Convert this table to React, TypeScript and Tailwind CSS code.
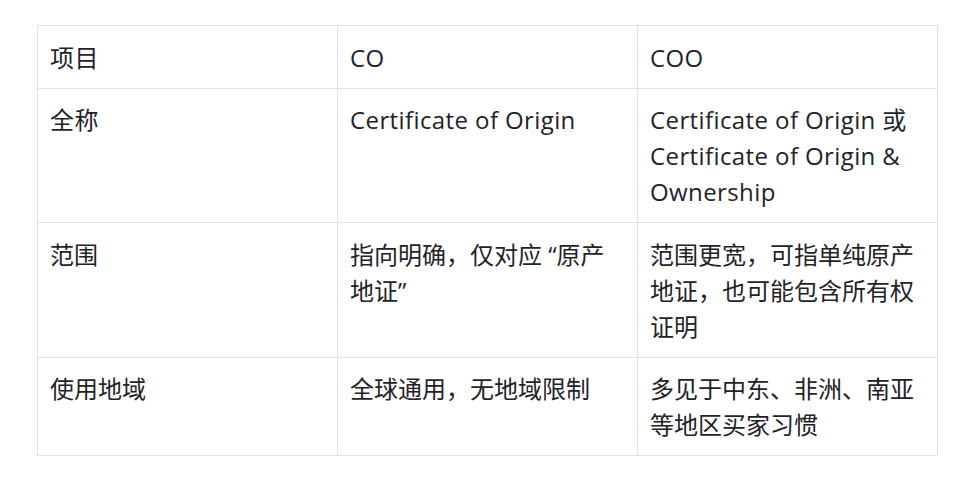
const rows: [string, string, string][] = [
  ["项目", "CO", "COO"],
  ["全称", "Certificate of Origin", "Certificate of Origin 或 Certificate of Origin & Ownership"],
  ["范围", "指向明确，仅对应 “原产地证”", "范围更宽，可指单纯原产地证，也可能包含所有权证明"],
  ["使用地域", "全球通用，无地域限制", "多见于中东、非洲、南亚等地区买家习惯"],
];

export default function App() {
  return (
    <div
      className="min-h-[477px] w-[966px] bg-white pl-[37px] pt-[25px] text-[#1f2328]"
      style={{ fontFamily: '"Open Sans", "Noto Sans CJK SC", sans-serif' }}
    >
      <table className="w-[900px] table-fixed border-collapse text-[24px] leading-[36px]">
        <colgroup>
          <col className="w-[300px]" />
          <col className="w-[300px]" />
          <col className="w-[300px]" />
        </colgroup>
        <tbody>
          {rows.map((row, i) => (
            <tr key={i} className={i < 2 ? "tracking-[0.4px]" : ""}>
              {row.map((cell, j) => (
                <td key={j} className="border border-[#dfe2e5] px-[12px] pt-[13.5px] pb-[12px] align-top">
                  {cell}
                </td>
              ))}
            </tr>
          ))}
        </tbody>
      </table>
    </div>
  );
}
